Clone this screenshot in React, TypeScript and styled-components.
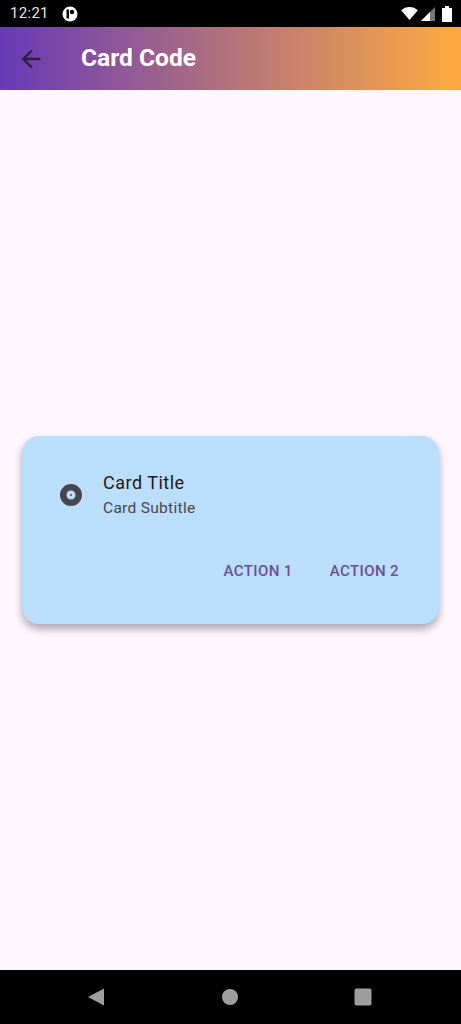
import React from "react";
import styled, { createGlobalStyle } from "styled-components";

const GlobalStyle = createGlobalStyle`
  html, body {
    margin: 0;
    padding: 0;
    background: #000;
    font-family: Roboto, "Liberation Sans", sans-serif;
  }
`;

const Screen = styled.div`
  width: 461px;
  height: 1024px;
  display: flex;
  flex-direction: column;
  overflow: hidden;
`;

const StatusBar = styled.div`
  height: 27px;
  flex: none;
  background: #000;
  display: flex;
  align-items: center;
  justify-content: space-between;
  padding: 0 9px 0 10px;
  box-sizing: border-box;
`;

const StatusLeft = styled.div`
  display: flex;
  align-items: center;
  gap: 13px;
`;

const StatusRight = styled.div`
  display: flex;
  align-items: center;
  gap: 3px;
`;

const Clock = styled.span`
  color: #e4e4e4;
  font-size: 15px;
  letter-spacing: 0.3px;
  line-height: 27px;
`;

const BatteryIcon = styled.svg`
  margin-left: 4px;
`;

const AppBar = styled.header`
  height: 63px;
  flex: none;
  background: linear-gradient(90deg, #673ab7 0%, #ffab40 100%);
  display: flex;
  align-items: center;
  padding-left: 17px;
  box-sizing: border-box;
  gap: 36px;
`;

const BackButton = styled.div`
  width: 28px;
  height: 28px;
  display: flex;
  color: #2c1f3d;
`;

const AppTitle = styled.h1`
  margin: 0 0 2px;
  color: #fff;
  font-size: 24.6px;
  font-weight: 700;
`;

const Body = styled.main`
  flex: 1;
  background: #fff8ff;
  display: flex;
  align-items: center;
  justify-content: center;
`;

const Card = styled.section`
  width: 417px;
  height: 188px;
  box-sizing: border-box;
  background: #bbdefb;
  border-radius: 17px;
  box-shadow: 0 5px 9px rgba(60, 50, 60, 0.42);
  display: flex;
  flex-direction: column;
`;

const ListRow = styled.div`
  display: flex;
  align-items: center;
  padding: 35px 0 0 37px;
  gap: 20px;
`;

const TextBlock = styled.div`
  display: flex;
  flex-direction: column;
  gap: 4px;
`;

const CardTitle = styled.div`
  color: #1f1a24;
  font-size: 18px;
  line-height: 23px;
  letter-spacing: 0.5px;
`;

const CardSubtitle = styled.div`
  color: #4b4654;
  font-size: 15.5px;
  line-height: 20px;
  letter-spacing: 0.3px;
`;

const Actions = styled.div`
  display: flex;
  justify-content: flex-end;
  gap: 37px;
  margin-top: 43px;
  padding-right: 40px;
`;

const Action = styled.button`
  border: 0;
  padding: 0;
  background: none;
  font-family: inherit;
  color: #6a4f9b;
  font-size: 15px;
  font-weight: 500;
  line-height: 20px;
  letter-spacing: 0.4px;
`;

const NavBar = styled.nav`
  height: 54px;
  flex: none;
  background: #000;
  display: flex;
  align-items: center;
  padding-left: 87px;
  gap: 115.5px;
  box-sizing: border-box;
  padding-bottom: 1px;
`;

const NavIcon = styled.svg`
  width: 18px;
  height: 18px;
  display: block;
  fill: #9e9e9e;
`;

export default function App() {
  return (
    <Screen>
      <GlobalStyle />
      <StatusBar>
        <StatusLeft>
          <Clock>12:21</Clock>
          <svg width="16" height="16" viewBox="0 0 16 16">
            <circle cx="8" cy="8" r="7.5" fill="#fff" />
            <path d="M4.5 3.5h2.5v9H4.5z" fill="#000" />
            <circle cx="10" cy="6" r="2.2" fill="#000" />
          </svg>
        </StatusLeft>
        <StatusRight>
          <svg width="17" height="13" viewBox="0 0 18 14">
            <path d="M0 3.5C2.5 1.3 5.6 0 9 0s6.5 1.3 9 3.5L9 14z" fill="#fff" />
          </svg>
          <svg width="14" height="14" viewBox="0 0 14 14">
            <path d="M14 0v14H0z" fill="#777" />
            <path d="M9 5v9H0z" fill="#fff" />
          </svg>
          <BatteryIcon width="10" height="16" viewBox="0 0 10 16">
            <path d="M3 0h4v2h3v14H0V2h3z" fill="#fff" />
          </BatteryIcon>
        </StatusRight>
      </StatusBar>
      <AppBar>
        <BackButton>
          <svg width="28" height="28" viewBox="0 0 24 24" fill="currentColor">
            <path d="M20 11H7.83l5.59-5.59L12 4l-8 8 8 8 1.41-1.41L7.83 13H20v-2z" />
          </svg>
        </BackButton>
        <AppTitle>Card Code</AppTitle>
      </AppBar>
      <Body>
        <Card>
          <ListRow>
            <svg width="24" height="24" viewBox="0 0 24 24" fill="#49454f">
              <path d="M12 1a11 11 0 1 0 0 22 11 11 0 0 0 0-22zm0 15.5a4.5 4.5 0 1 1 0-9 4.5 4.5 0 0 1 0 9zm0-5.5a1 1 0 1 0 0 2 1 1 0 0 0 0-2z" />
            </svg>
            <TextBlock>
              <CardTitle>Card Title</CardTitle>
              <CardSubtitle>Card Subtitle</CardSubtitle>
            </TextBlock>
          </ListRow>
          <Actions>
            <Action>ACTION 1</Action>
            <Action>ACTION 2</Action>
          </Actions>
        </Card>
      </Body>
      <NavBar>
        <NavIcon viewBox="0 0 18 18">
          <path d="M17 0.5v17L1 9z" />
        </NavIcon>
        <NavIcon viewBox="0 0 18 18">
          <circle cx="9" cy="9" r="8" />
        </NavIcon>
        <NavIcon viewBox="0 0 18 18">
          <rect x="0.5" y="0.5" width="17" height="17" rx="2" />
        </NavIcon>
      </NavBar>
    </Screen>
  );
}
